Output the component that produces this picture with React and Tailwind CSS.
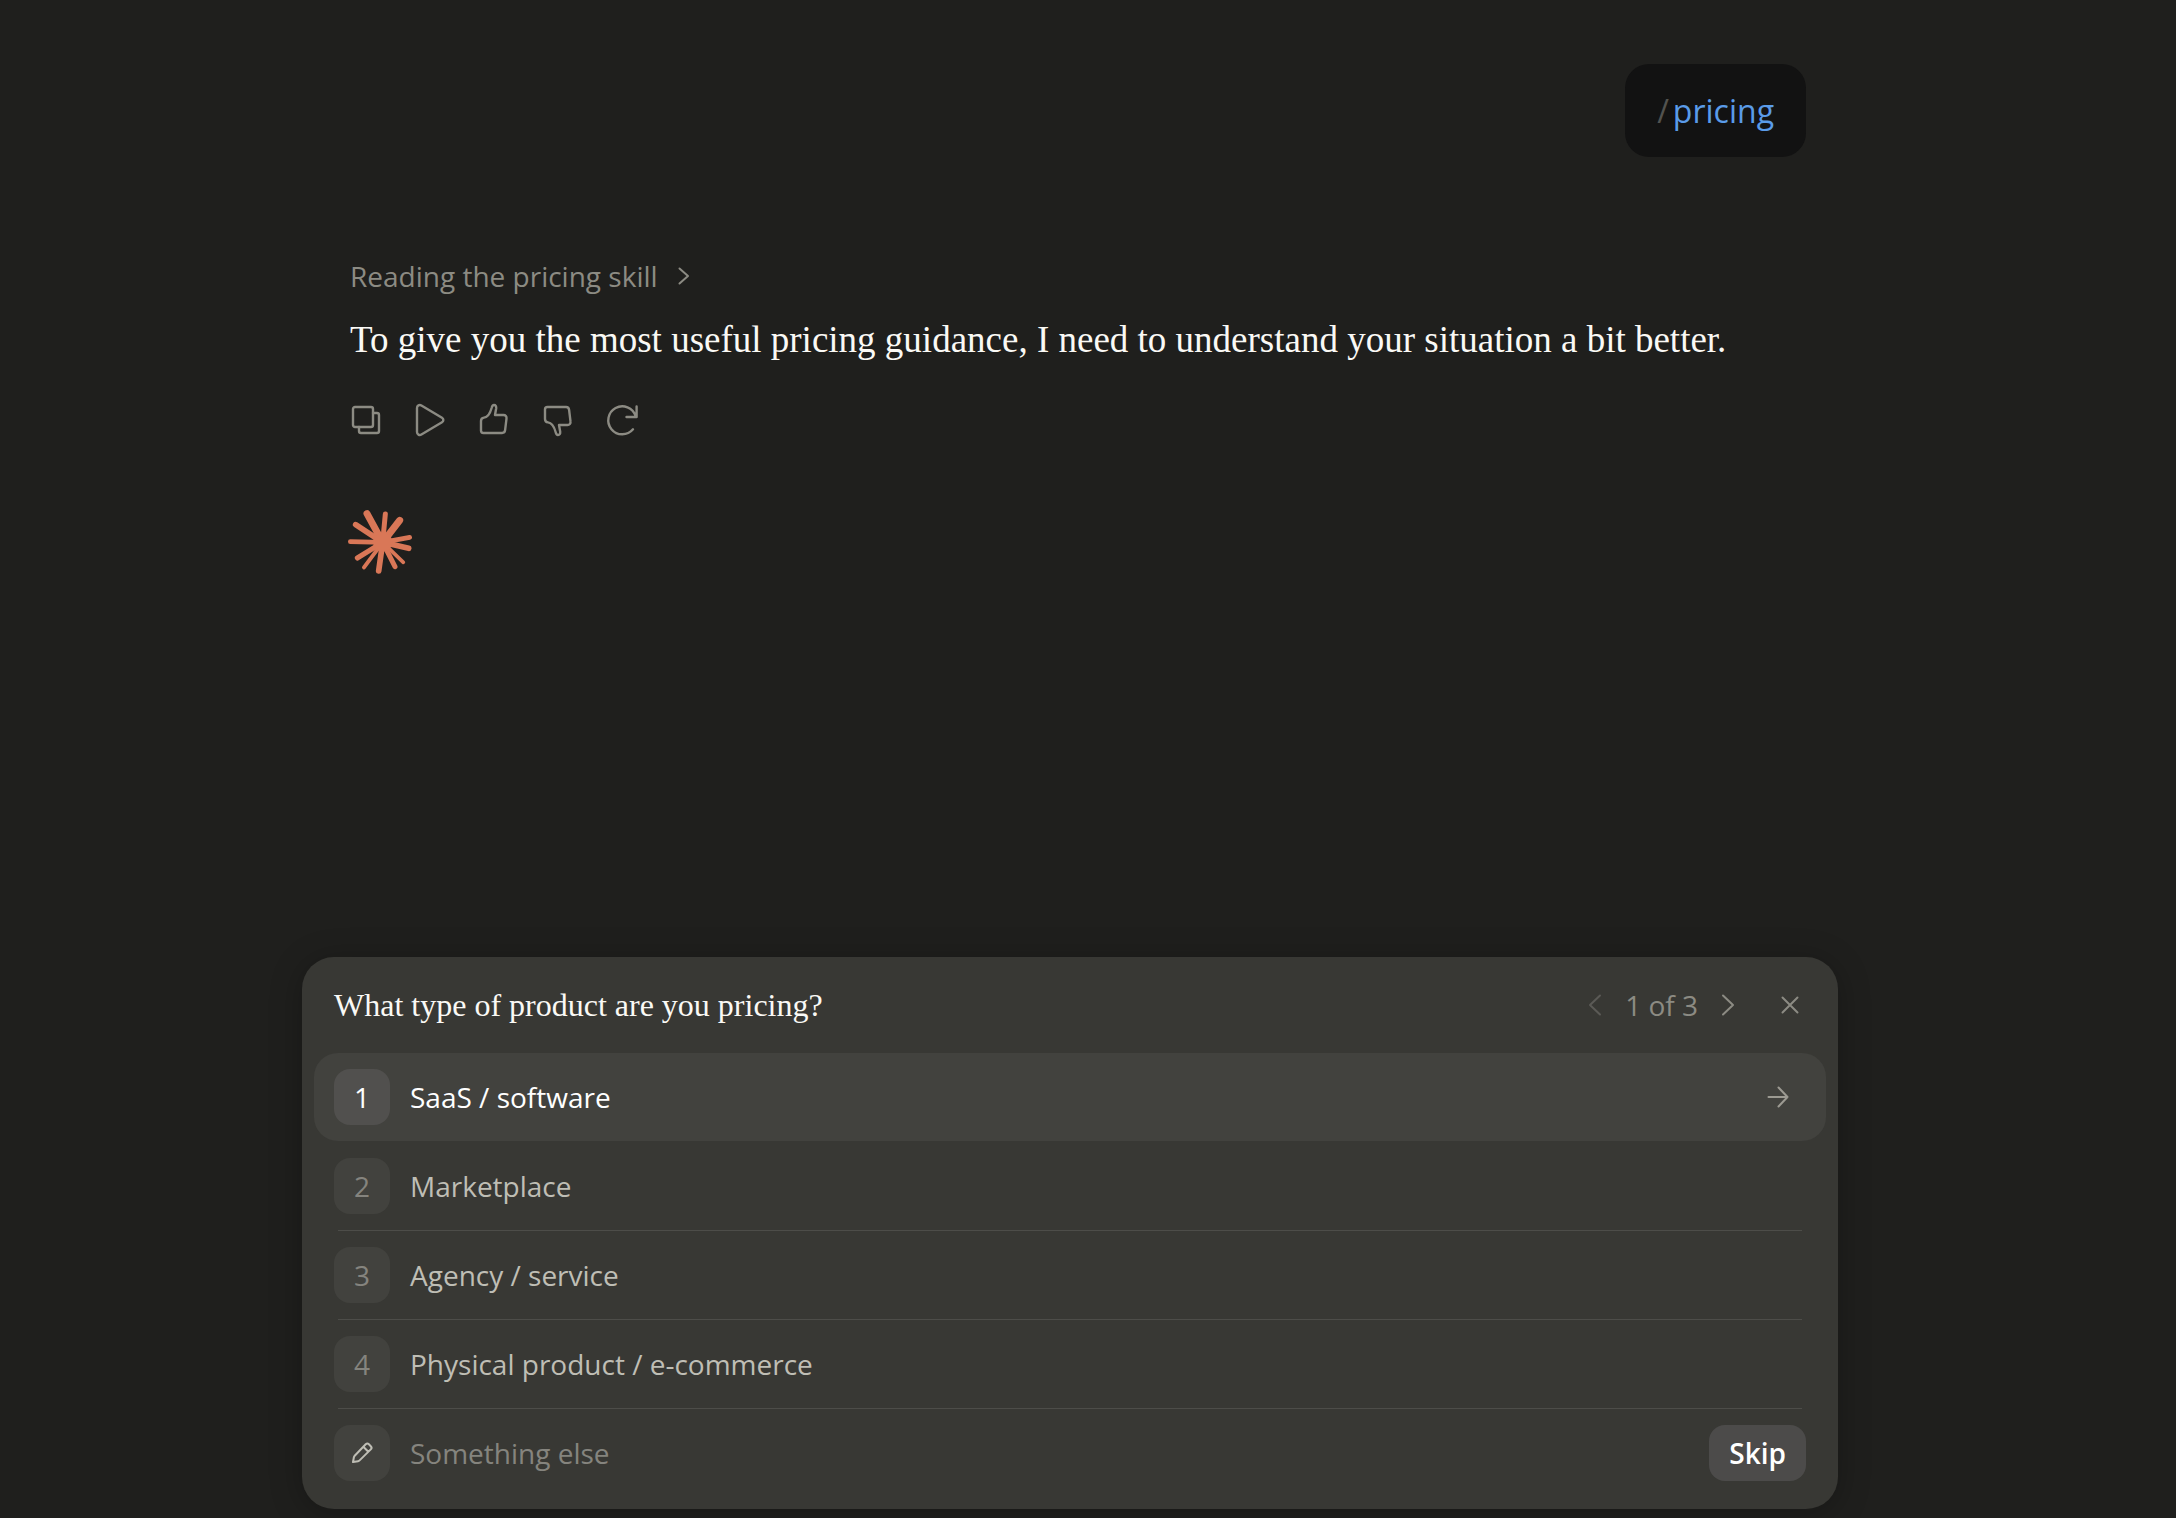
import { useState } from 'react';

const options = ['SaaS / software', 'Marketplace', 'Agency / service', 'Physical product / e-commerce'];

const thumbPath =
  'M3 17c0-2 1-3.2 3-3.4 4-.4 6.5-5.6 7.6-9.6C14 2.3 14.6 1 16 1c1.6 0 2.4 1.4 2.2 3.2L17 11h8.5c2 0 3.3 1.6 3 3.6l-1.4 11.6c-.2 1.7-1.4 2.8-3 2.8H5.4C4 29 3 28 3 26.6z';

const actions = [
  {
    label: 'Copy',
    icon: (
      <>
        <rect x="3" y="3" width="20" height="20" rx="2" />
        <path d="M23 9h4a2 2 0 0 1 2 2v16a2 2 0 0 1-2 2H11a2 2 0 0 1-2-2v-4" />
      </>
    ),
  },
  {
    label: 'Read aloud',
    icon: <path d="M3 4v24c0 2.4 2.4 3.7 4.4 2.5L28 18.2c1.8-1.1 1.8-3.3 0-4.4L7.4 1.5C5.4.3 3 1.6 3 4z" />,
  },
  { label: 'Good response', icon: <path d={thumbPath} /> },
  { label: 'Bad response', icon: <path d={thumbPath} transform="translate(0 32) scale(1 -1)" /> },
  {
    label: 'Retry',
    icon: <path d="M27 25.3A14 14 0 1 1 29.6 12M30.6 2.5V13H20.5" />,
  },
];

// Rays of the logo: x, y of the tip and the stroke width
const rays = [
  [111, 71, 21],
  [166, 72, 15],
  [209, 91, 21],
  [239, 142, 14],
  [236, 175, 17],
  [220, 217, 11],
  [195, 230, 15],
  [146, 243, 17],
  [102, 232, 12],
  [82, 204, 15],
  [61, 155, 14],
  [77, 104, 17],
];

function Icon({ className, strokeWidth = 2, viewBox = '0 0 24 24', children }) {
  return (
    <svg
      className={className}
      viewBox={viewBox}
      fill="none"
      stroke="currentColor"
      strokeWidth={strokeWidth}
      strokeLinecap="round"
      strokeLinejoin="round"
      aria-hidden="true"
    >
      {children}
    </svg>
  );
}

function Logo() {
  return (
    <svg className="block size-16 text-[#d97757]" viewBox="54 60 192 192" stroke="currentColor" strokeLinecap="round" aria-hidden="true">
      {rays.map(([x, y, width]) => (
        <line key={`${x}-${y}`} x1="158" y1="157" x2={x} y2={y} strokeWidth={width} />
      ))}
      <circle cx="158" cy="156" r="29" fill="currentColor" stroke="none" />
    </svg>
  );
}

function Badge({ active, children }) {
  return (
    <span
      className={`flex size-14 shrink-0 items-center justify-center rounded-2xl ${
        active ? 'bg-[#51504e] text-white' : 'bg-[#42423e] text-[#85847e]'
      }`}
    >
      {children}
    </span>
  );
}

export default function App() {
  const [selected, setSelected] = useState(0);
  const [other, setOther] = useState('');

  return (
    <div className="min-h-screen bg-[#1f1f1d] pr-9 pb-[9px] font-['Open_Sans',sans-serif] text-[28px] leading-10">
      <div className="mx-auto flex min-h-[calc(100vh-9px)] max-w-[1536px] flex-col">
        {/* Conversation */}
        <main className="flex flex-col pt-16 pr-8 pl-12">
          <div className="flex gap-1 self-end rounded-3xl bg-[#121212] px-8 py-6 text-[32px] leading-[45px]">
            <span className="text-[#52524f]">/</span>
            <span className="text-[#5a9be8]">pricing</span>
          </div>

          <button type="button" className="mt-[99px] flex items-center gap-5 self-start text-[#8c8b83]">
            Reading the pricing skill
            <Icon className="h-5 w-3" viewBox="0 0 12 20">
              <path d="m1.500 2.500 8.500 7.500-8.500 7.500" />
            </Icon>
          </button>

          <p className="mt-5 font-['Liberation_Serif',serif] text-[37px] leading-12 text-[#faf9f5]">
            To give you the most useful pricing guidance, I need to understand your situation a bit better.
          </p>

          <div className="mt-10 flex gap-8 text-[#8c8b83]">
            {actions.map(({ label, icon }) => (
              <button key={label} type="button" aria-label={label}>
                <Icon className="block size-8 overflow-visible" viewBox="0 0 32 32" strokeWidth={2.4}>
                  {icon}
                </Icon>
              </button>
            ))}
          </div>

          <div className="-ml-0.5 mt-[74px]">
            <Logo />
          </div>
        </main>

        {/* Question panel */}
        <section className="mt-auto rounded-[32px] bg-[#383834] px-3 pb-3 shadow-[0_4px_32px_rgba(0,0,0,0.25)]">
          <header className="flex h-24 items-center justify-between px-5">
            <h2 className="font-['Liberation_Serif',serif] text-[32px] text-[#faf9f5]">
              What type of product are you pricing?
            </h2>
            <div className="flex items-center gap-[18px] text-[#8c8b83]">
              <button type="button" aria-label="Previous question" className="text-[#5b5a56]">
                <Icon className="block size-6">
                  <path d="m17 2.500-10 9.500 10 9.500" />
                </Icon>
              </button>
              <span>1 of 3</span>
              <button type="button" aria-label="Next question">
                <Icon className="block size-6">
                  <path d="m7 2.500 10 9.500-10 9.500" />
                </Icon>
              </button>
              <button type="button" aria-label="Close" className="ml-4">
                <Icon className="block size-8" viewBox="0 0 32 32">
                  <path d="m8.500 8.500 15 15M23.500 8.500l-15 15" />
                </Icon>
              </button>
            </div>
          </header>

          <ul>
            {options.map((option, i) => (
              <li key={option}>
                <button
                  type="button"
                  onClick={() => setSelected(i)}
                  className={`flex h-22 w-full items-center gap-5 rounded-3xl px-5 text-left ${
                    selected === i ? 'bg-[#42423e] text-white' : 'text-[#bfbeb5]'
                  }`}
                >
                  <Badge active={selected === i}>{i + 1}</Badge>
                  <span className="grow">{option}</span>
                  {selected === i && (
                    <span className="flex size-14 items-center justify-center text-[#9c9a92]">
                      <Icon className="size-6">
                        <path d="M2.500 12h19M12.500 2.500l9 9.500-9 9.500" />
                      </Icon>
                    </span>
                  )}
                </button>
                <div className={`mx-6 h-px ${selected === i ? '' : 'bg-[#4d4d49]'}`} />
              </li>
            ))}
          </ul>

          {/* Free answer */}
          <div className="flex h-22 items-center gap-5 px-5">
            <Badge>
              <Icon className="size-6 text-[#bfbeb5]">
                <path d="m3 21 .9-4.700c.1-.6.400-1.100.8-1.500L15.700 3.300c.9-.9 2.300-.9 3.200 0l1.900 1.900c.9.9.9 2.300 0 3.200L9.600 19.400c-.4.4-.9.7-1.500.8zM13.300 5.800l5 5" />
              </Icon>
            </Badge>
            <input
              type="text"
              aria-label="Something else"
              placeholder="Something else"
              value={other}
              onChange={(e) => setOther(e.target.value)}
              className="min-w-0 grow bg-transparent text-white outline-none placeholder:text-[#85847e]"
            />
            <button type="button" className="h-14 rounded-2xl bg-[#4c4b4a] px-5 font-semibold text-white">
              Skip
            </button>
          </div>
        </section>
      </div>
    </div>
  );
}
